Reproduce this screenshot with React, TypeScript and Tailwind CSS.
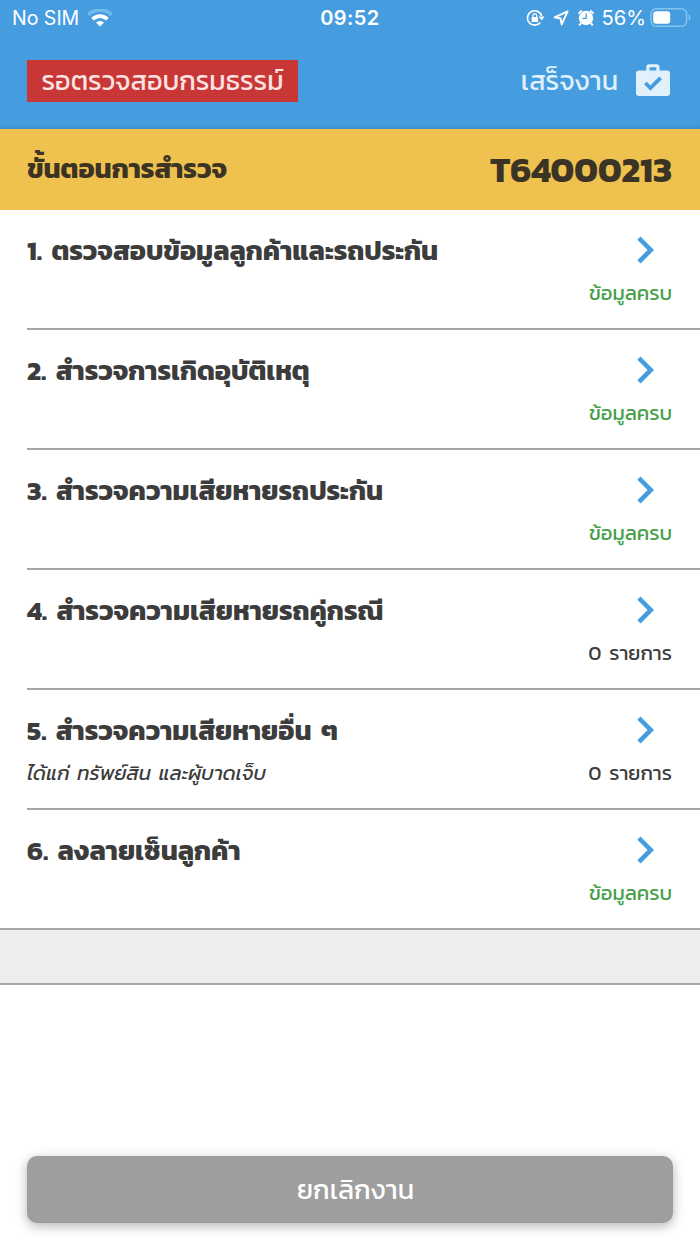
import { MdChevronRight } from "react-icons/md";

interface IStep {
  id: number;
  title: string;
  note?: string;
  status: string;
  done: boolean;
}

const steps: IStep[] = [
  {
    id: 1,
    title: "ตรวจสอบข้อมูลลูกค้าและรถประกัน",
    status: "ข้อมูลครบ",
    done: true,
  },
  {
    id: 2,
    title: "สำรวจการเกิดอุบัติเหตุ",
    status: "ข้อมูลครบ",
    done: true,
  },
  {
    id: 3,
    title: "สำรวจความเสียหายรถประกัน",
    status: "ข้อมูลครบ",
    done: true,
  },
  {
    id: 4,
    title: "สำรวจความเสียหายรถคู่กรณี",
    status: "0 รายการ",
    done: false,
  },
  {
    id: 5,
    title: "สำรวจความเสียหายอื่น ๆ",
    note: "ได้แก่ ทรัพย์สิน และผู้บาดเจ็บ",
    status: "0 รายการ",
    done: false,
  },
  {
    id: 6,
    title: "ลงลายเซ็นลูกค้า",
    status: "ข้อมูลครบ",
    done: true,
  },
];

const StatusBar = () => {
  return (
    <div className="grid h-9 grid-cols-3 items-center pr-2 pl-3 font-['Inter',sans-serif] text-[19.5px] text-white">
      <div className="flex items-center gap-2">
        <span className="pt-0.5 whitespace-nowrap">No SIM</span>
        <svg width="26" height="19" viewBox="0 0 26 19" fill="none">
          <path d="M1.5 5.6a16.5 16.5 0 0 1 23 0" stroke="#6fbcec" strokeWidth="3.6" />
          <path d="M5.6 10.2a10.3 10.3 0 0 1 14.8 0" stroke="white" strokeWidth="3.8" />
          <path d="M13 17.6l-4-4a5.7 5.7 0 0 1 8 0z" fill="white" />
        </svg>
      </div>
      <span className="pr-1 text-center text-[20px] font-semibold tracking-[0.4px]">
        09:52
      </span>
      <div className="flex items-center justify-end">
        <svg width="19" height="18" viewBox="0 0 19 18" fill="none">
          <path d="M15.6 7A7.2 7.2 0 1 0 14.2 13.6" stroke="white" strokeWidth="1.7" />
          <path d="M12.6 7.6h6l-3 4z" fill="white" />
          <rect x="5.6" y="8" width="6.4" height="5" rx="0.6" fill="white" />
          <path d="M6.9 8.5V6.8a1.9 1.9 0 0 1 3.8 0v1.7" stroke="white" strokeWidth="1.2" />
        </svg>
        <svg className="ml-2" width="16" height="16" viewBox="0 0 16 16" fill="none">
          <path
            d="M14.6 1.4L1.6 7.3l6 1.1 1.1 6z"
            stroke="white"
            strokeWidth="2"
            strokeLinejoin="round"
          />
        </svg>
        <svg className="ml-2" width="18" height="18" viewBox="0 0 18 18" fill="none">
          <circle cx="9" cy="9" r="7.2" fill="white" />
          <path
            d="M1.5 4.6L4.7 1.5M16.5 4.6l-3.2-3.1M4 14.2l-1.7 2.2M14 14.2l1.7 2.2"
            stroke="white"
            strokeWidth="2"
          />
          <path d="M9.2 4.6v4.8H5.4" stroke="#459ddf" strokeWidth="1.3" />
        </svg>
        <span className="ml-1.5 text-[20.2px]">56%</span>
        <svg className="ml-1" width="42" height="20" viewBox="0 0 42 20" fill="none">
          <rect x="1" y="0.8" width="35.600" height="17.400" rx="5" stroke="#82c2ee" strokeWidth="1.6" />
          <rect x="3.2" y="3.2" width="17" height="12.6" rx="3" fill="white" />
          <path d="M38.600 6c2.400 1 2.400 5.800 0 6.800z" fill="#82c2ee" />
        </svg>
      </div>
    </div>
  );
};

const BagCheckIcon = () => {
  return (
    <svg className="-mt-0.5" width="34" height="32" viewBox="0 0 34 32" fill="none">
      <path
        d="M10.3 6.5V3a2.8 2.8 0 0 1 2.8-2.8h7.6a2.8 2.8 0 0 1 2.8 2.8v3.5H31a3 3 0 0 1 3 3V29a3 3 0 0 1-3 3H3a3 3 0 0 1-3-3V9.5a3 3 0 0 1 3-3zM13.5 3.2v3.3h6.8V3.2z"
        fill="#e1f1fb"
        fillRule="evenodd"
      />
      <path d="M9.4 19l5 5L24.600 13.800" stroke="#459ddf" strokeWidth="3.8" />
    </svg>
  );
};

const StepItem = ({ step }: { step: IStep }) => {
  return (
    <li
      className={`${
        step.id === steps.length ? "" : "border-b-2 border-[#a6a6a6]"
      } ml-[27px] flex h-[120px] justify-between pr-7`}
    >
      <div className="flex flex-col whitespace-nowrap">
        <h2 className="mt-5 text-[27px] leading-[42px] font-bold [word-spacing:3.7px]">
          {step.id}. {step.title}
        </h2>
        {step.note && (
          <p className="text-[20.3px] leading-[42px] italic [word-spacing:3px]">{step.note}</p>
        )}
      </div>
      <div className="flex flex-col items-end whitespace-nowrap">
        <MdChevronRight className="mt-[13px] size-[54px] text-[#459ddf]" />
        <p
          className={`${
            step.done ? "text-[#43a047]" : "text-[#3c3c3c]"
          } -mt-[5px] text-[20.3px] leading-[42px] [word-spacing:3px]`}
        >
          {step.status}
        </p>
      </div>
    </li>
  );
};

const App = () => {
  return (
    <div className="flex h-[1244px] w-[700px] flex-col overflow-hidden bg-white font-['Kanit','Inter','Noto_Sans_Thai',sans-serif] text-[#3c3c3c]">
      <header className="h-[129px] shrink-0 bg-[#459ddf] shadow-[inset_0_-5px_5px_-4px_rgba(0,0,0,0.15)]">
        <StatusBar />
        <div className="mt-6 flex items-center justify-between pr-[30px] pl-[27px]">
          <span className="flex h-[42px] w-[271px] items-center justify-center bg-[#c93636] text-[27px] whitespace-nowrap text-[#fbe3e3]">
            รอตรวจสอบกรมธรรม์
          </span>
          <button className="flex items-center gap-[18px] text-[27px] leading-[42px] whitespace-nowrap text-[#e1f1fb]">
            เสร็จงาน
            <BagCheckIcon />
          </button>
        </div>
      </header>
      <div className="flex h-[81px] shrink-0 items-center justify-between bg-[#efc250] pr-7 pl-[27px] font-bold whitespace-nowrap text-[#3b3425]">
        <h1 className="text-[27px]">ขั้นตอนการสำรวจ</h1>
        <span className="text-[35.5px]">T64000213</span>
      </div>
      <ul>
        {steps.map((step) => (
          <StepItem key={step.id} step={step} />
        ))}
      </ul>
      <div className="-mt-0.5 h-[57px] shrink-0 border-y-2 border-[#a6a6a6] bg-[#ededed]" />
      <button className="mx-[27px] mt-auto mb-[21px] h-[67px] shrink-0 rounded-[10px] bg-[#9e9e9e] pt-0.5 pl-[11px] text-[27px] text-white shadow-[0_3px_12px_rgba(0,0,0,0.3)]">
        ยกเลิกงาน
      </button>
    </div>
  );
};

export default App;
